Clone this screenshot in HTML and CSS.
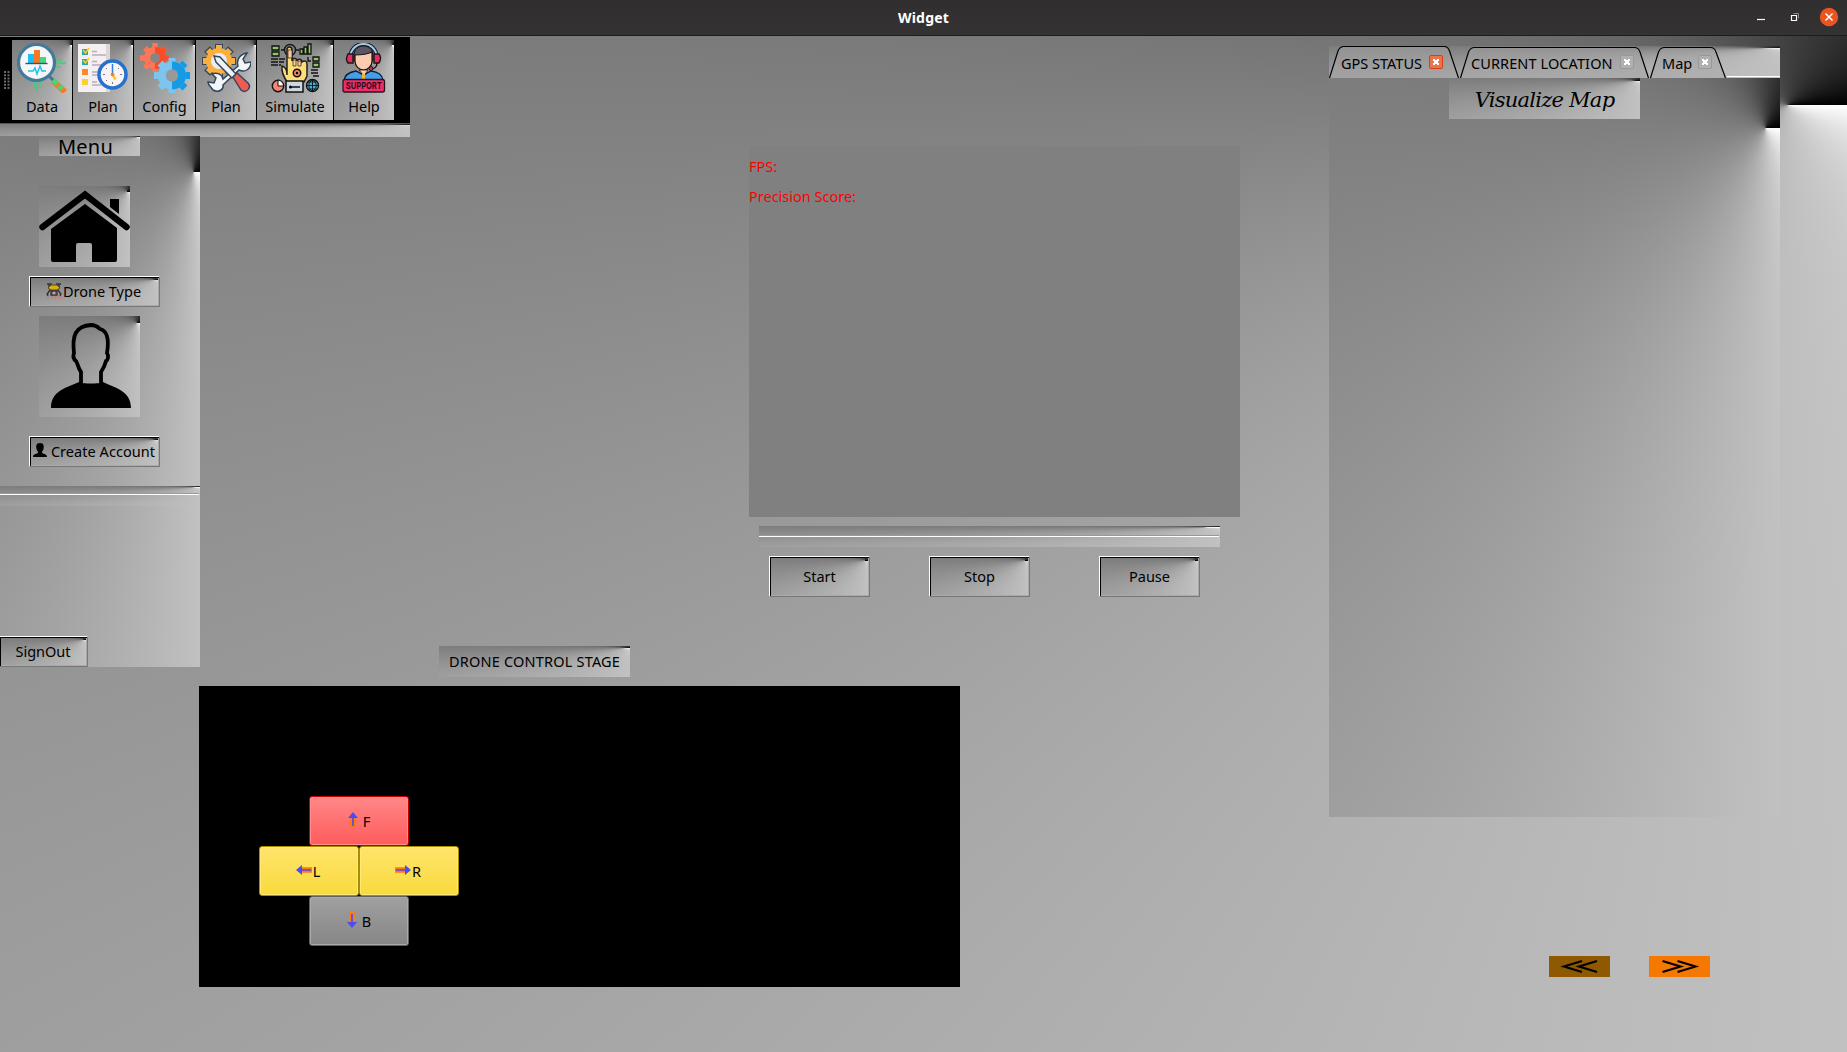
FILE: index.html
```html
<!DOCTYPE html>
<html lang="en">
<head>
<meta charset="utf-8">
<title>Widget</title>
<link rel="stylesheet" href="styles.css">
</head>
<body>
<header class="titlebar">
  <span class="title">Widget</span>
  <div class="winctl">
    <svg width="110" height="36" viewBox="0 0 110 36"><path d="M20 19.500h8" stroke="#fff" stroke-width="1.200"/><path d="M54.500 15.500h5v5h-5z" fill="none" stroke="#fff" stroke-width="1.200"/><path d="M56.500 13.500h5v5" fill="none" stroke="#8a8888"/><circle cx="92" cy="17" r="9.200" fill="#e95420"/><path d="M88.500 13.500l7 7m0-7l-7 7" stroke="#fff" stroke-width="1.500"/></svg>
  </div>
</header>
<main class="client shade">
  <section class="work">
    <div class="upper">
      <div class="left">
        <nav class="toolbar">
          <svg class="grip" width="6" height="18" viewBox="0 0 6 18"><path d="M1 0v18M4.500 0v18" stroke="#6a6a6a" stroke-width="2" stroke-dasharray="2 1.200"/></svg>
          <button class="tool shade w60"><svg viewBox="0 0 50 50"><g stroke="#3ccf7c" stroke-width="1.400"><path d="M38 17h7M40 20h9M38 24h6M17 39v6M20 39v10M23 39v6"/></g><path d="M31 32l8 8" stroke="#3e7590" stroke-width="3"/><path d="M36 38l12 11" stroke="#f77b20" stroke-width="6"/><path d="M36 37l4 4M42 43l3 3" stroke="#4bd27e" stroke-width="5"/><circle cx="19.500" cy="19.500" r="18" fill="#f4f6f7" stroke="#417a9b" stroke-width="3.200"/><path d="M11 11h6v9h-6z" fill="#20bdf0"/><path d="M17 7h6v13h-6z" fill="#f67a24"/><path d="M23 14h6v6h-6z" fill="#48d284"/><path d="M8.500 20.500h22" stroke="#31566d" stroke-width="1.400"/><path d="M11 28h5l2-3 2 6 3-8 2 5h4" fill="none" stroke="#1cc3e8" stroke-width="1.500"/></svg><span>Data</span></button>
          <button class="tool shade w60"><svg viewBox="0 0 50 50"><path d="M0 1h32v48H0z" fill="#f4eff0"/><path d="M28 1h4v48h-4z" fill="#dcd5da"/><g fill="#2aa7ae"><path d="M4 6h6v6H4zM4 16h6v6H4z"/></g><path d="M5 7l2.500 3L11 5M5 17l2.500 3 3.500-5" fill="none" stroke="#fccb28" stroke-width="1.500"/><path d="M4 26h6v6H4z" fill="#f98a26"/><path d="M4 36h6v6H4z" fill="#fdce30"/><g stroke="#b8adb9" stroke-width="1.300"><path d="M14 8.500h5M14 12h14M14 18.500h5M14 22h14M14 29h7M14 32h7M14 39h5M14 42h9"/></g><circle cx="34.500" cy="31.500" r="13.500" fill="#f8f4f5" stroke="#2671d0" stroke-width="3.500"/><path d="M34.500 21v10" stroke="#2c83dd" stroke-width="1.500"/><path d="M34.500 31.500l3 5" stroke="#fbc52b" stroke-width="2.500"/><circle cx="34.500" cy="31.500" r="1.800" fill="#f47d31"/><path d="M25 31.500h2M42 31.500h2M34.500 39v2M28 25l1 1M41 25l-1 1M28 38l1-1" stroke="#7a7781"/></svg><span>Plan</span></button>
          <button class="tool shade w61"><svg viewBox="0 0 50 50"><g stroke="#fb5126" stroke-width="5.500"><path stroke="#ff7657" d="M15 0v29M0 15h15M5 5l20 20M25 5L5 25"/><path d="M15 15h14"/><path d="M16 14l9-9M16 16l9 9"/></g><circle cx="15" cy="15" r="8" fill="none" stroke="#ff7657" stroke-width="6"/><path d="M15 7a8 8 0 010 16" fill="none" stroke="#f94c25" stroke-width="6"/><g stroke-width="7"><path stroke="#7bc5ef" d="M32 15v35M14 32.500h18M20 20l24 25M45 20L20 45"/><path stroke="#159be6" d="M33 32.500h17M33.500 31L45 20M33.500 34L45 45"/></g><circle cx="32" cy="32.500" r="10" fill="#8c8c8c" stroke="#7bc5ef" stroke-width="8"/><path d="M32 22.500a10 10 0 010 20" fill="none" stroke="#159be6" stroke-width="8"/><circle cx="15" cy="15" r="4.800" fill="#858585"/><circle cx="32" cy="32.500" r="6" fill="#999"/></svg><span>Config</span></button>
          <button class="tool shade w60"><svg viewBox="0 0 50 50"><g stroke="#33465d" stroke-width="8"><path d="M18 1v35M1 18h34M6 6l24 24M30 6L6 30"/></g><g stroke="#fbaf3e" stroke-width="6"><path d="M18 2v33M2 18h32M7 7l22 22M29 7L7 29"/></g><circle cx="18" cy="18" r="13" fill="#fbaf3e"/><circle cx="18" cy="18" r="8" fill="#e8edf3"/><path d="M12 47c-2-3-5-5-5-8l6 1 2-5-4-4c5-2 10 0 11 5l15-13c-2-6 2-12 9-13l-4 6 2 4 6-1c0 7-6 11-12 8L22 42c1 5-5 8-10 5z" fill="#f4f7fa" stroke="#31455d" stroke-width="1.500"/><path d="M13 13l6 1 16 17-4 4-16-16z" fill="#eef2f6" stroke="#31455d" stroke-width="1.400"/><path d="M32 34l4-4 11 10c4 5-2 11-7 7z" fill="#f15a50" stroke="#31455d" stroke-width="1.400"/></svg><span>Plan</span></button>
          <button class="tool shade w76"><svg viewBox="0 0 50 50"><g fill="#8cc765" stroke="#111" stroke-width="1.300"><path d="M2 3h7v4H2zM2 9h7v4H2zM30 6h3v5h-3zM34 4h3v7h-3zM38 1h3v10h-3zM43 14h6v4h-6zM43 20h6v4h-6z"/></g><g fill="none" stroke="#151515" stroke-width="1.400"><circle cx="20" cy="7" r="5.500"/><path d="M1 16h14M1 19h13M1 22h10M15 7h-4M26 7h3M38 14v4h4M41 27h8M41 30h8M43 33h6" stroke-dasharray="7 1"/></g><path d="M17 32V7c0-4 5-4 5 0v11c1-4 5-3 5 0 1-3 5-2 5 1 2-2 5-1 5 2v12l-3 6H17c-3-5-6-10-5-16 4 1 5 4 5 9z" fill="#fcdf78" stroke="#251f1c" stroke-width="1.500"/><path d="M18 7h4v8h-4zM23 17h3v6h-3zM28 18h3v5h-3z" fill="#ffcba5" stroke="#1d1d1d" stroke-width=".7"/><circle cx="27" cy="30" r="3.700" fill="#f78065" stroke="#111" stroke-width="1.500"/><circle cx="27" cy="30" r="1.200"/><path d="M16 38h17v11H16z" fill="#ced8e2" stroke="#111" stroke-width="1.500"/><circle cx="20.500" cy="44" r="1.500"/><path d="M21 44h9" stroke="#111" stroke-width="1.500"/><circle cx="8" cy="43" r="5.700" fill="#fa8474" stroke="#111" stroke-width="1.400"/><path d="M8 37v6h5.500A6 6 0 008 37" fill="#fff" stroke="#111"/><circle cx="42.500" cy="42.500" r="6" fill="#4caed1" stroke="#111" stroke-width="1.400"/><path d="M36 42.500h13M42.500 36.500v12M38 39h9M38 46h9M42.500 36.500c-5 4-5 8 0 12 5-4 5-8 0-12" fill="none" stroke="#111" stroke-width=".9"/></svg><span>Simulate</span></button>
          <button class="tool shade w60"><svg viewBox="0 0 50 50"><path d="M11 16C11-4 38-4 38 16" fill="none" stroke="#18202d" stroke-width="4"/><path d="M11 16C11-4 38-4 38 16" fill="none" stroke="#a6c8ea" stroke-width="2"/><path d="M15 12c0-12 19-12 19 0v6H15z" fill="#5b5663" stroke="#111"/><path d="M16 12c6 0 13-1 17-3v9c0 5-4 9-8.500 9S16 23 16 18z" fill="#fdcbb0" stroke="#1c1717" stroke-width="1.200"/><path d="M9 11h5v9H9q-3-4 0-9zM35 11h5q3 4 0 9h-5z" fill="#ed2961" stroke="#181818" stroke-width="1.400"/><path d="M38 20c0 4-3 6-6 6" fill="none" stroke="#111" stroke-width="1.400"/><circle cx="32" cy="25.500" r="2" fill="#ed2961" stroke="#111"/><path d="M5 37c1-6 6-8 12-9l7.500 4 7.500-4c7 1 11 3 12 9z" fill="#429fec" stroke="#101d30" stroke-width="1.400"/><path d="M20 27h9l-4 6z" fill="#fdcbb0" stroke="#111" stroke-width=".8"/><path d="M24.500 31v7" stroke="#f5b62b" stroke-width="3"/><rect x="4" y="36.500" width="41.500" height="12.500" rx="2" fill="#f02d69" stroke="#2c1422" stroke-width="1.300"/><text x="24.800" y="46.300" text-anchor="middle" textLength="36" lengthAdjust="spacingAndGlyphs" font-family="Inter,sans-serif" font-weight="700" font-size="9.500" fill="#24111c">SUPPORT</text></svg><span>Help</span></button>
        </nav>
        <div class="strip shade"></div>
        <aside class="side shade">
          <div class="menu shade">Menu</div>
          <div class="home shade"><svg width="91" height="81" viewBox="0 0 91 81"><path d="M3.500 41L46 8.500 87.500 41" fill="none" stroke="#000" stroke-width="6.500" stroke-linecap="round" stroke-linejoin="miter"/><path d="M71 13h9v15l-9-7z"/><path d="M46 18l32 24v32q0 2-2 2H53V59q0-2-2-2H39q-2 0-2 2v17H14q-2 0-2-2V43z"/></svg></div>
          <button class="btn shade b131 drone"><svg width="16" height="16" viewBox="0 0 16 16"><path d="M1 1h5M10 1h5M3 1v3M13 1v3" stroke="#333" stroke-width="1.400"/><path d="M2 5l3-3h6l3 3-3 2H5z" fill="#dcae12" stroke="#50441c"/><path d="M4 7l-3 4 1 2M12 7l3 4-1 2M5 8h6v4H5z" fill="#666" stroke="#333" stroke-width="1.300"/><circle cx="8" cy="10" r="1.500" fill="#aaa"/><path d="M4 13l-3 3M7 13l-1 3M9 13l1 3M12 13l3 3" stroke="#e06a5d"/></svg><span>Drone Type</span></button>
          <div class="person shade"><svg width="101" height="101" viewBox="0 0 101 101"><path d="M42 68V56c-3-4-3-8-5-11-3-2-3-5-2-8-2-17 1-27 17-28 5 0 7 2 9 4 8 2 9 12 7 24 2 3 1 7-1 8-1 4-3 8-5 11v12" fill="none" stroke="#000" stroke-width="3.800"/><path d="M40 66c-12 6-28 8-28 26h80c0-18-17-20-28-26-4 2-20 2-24 0z"/></svg></div>
          <button class="btn shade b131 acct"><svg width="14" height="15" viewBox="0 0 14 15"><path d="M7 0c4 0 4 3 3.500 6L9 9v1c2 1 5 1 5 4H0c0-3 3-3 5-4V9L3.500 6C3 3 3 0 7 0"/></svg><span>Create Account</span></button>
          <div class="hline shade"></div>
          <button class="btn shade signout"><span>SignOut</span></button>
        </aside>
      </div>
      <div class="mid"><div class="stagelabel shade"><span>DRONE CONTROL STAGE</span></div></div>
      <div class="video">
        <div class="screen"><p>FPS:</p><p>Precision Score:</p></div>
        <div class="hline wide shade"></div>
        <div class="playrow">
          <button class="btn shade"><span>Start</span></button>
          <button class="btn shade"><span>Stop</span></button>
          <button class="btn shade pause"><span>Pause</span></button>
        </div>
      </div>
    </div>
    <section class="stage">
      <div class="pad">
        <button class="key red"><svg width="16" height="16" viewBox="0 0 16 16"><path d="M8 16V4" stroke="#ff7a10" stroke-width="5.500"/><path d="M8 14V4" stroke="#5951de" stroke-width="1.800"/><path d="M3 6l5-6 5 6z" fill="#4d4cf0"/></svg><span>F</span></button>
        <div class="row">
          <button class="key yellow flat"><svg width="16" height="16" viewBox="0 0 16 16"><path d="M16 8H4" stroke="#ff7a10" stroke-width="5.500"/><path d="M15 8H4" stroke="#7a51be" stroke-width="1.800"/><path d="M6 3L0 8l6 5z" fill="#4d4cf0"/></svg><span>L</span></button>
          <button class="key yellow flat"><svg width="16" height="16" viewBox="0 0 16 16"><path d="M0 8h12" stroke="#ff7a10" stroke-width="5.500"/><path d="M1 8h11" stroke="#7a51be" stroke-width="1.800"/><path d="M10 3l6 5-6 5z" fill="#4d4cf0"/></svg><span>R</span></button>
        </div>
        <button class="key gray"><svg width="16" height="16" viewBox="0 0 16 16"><path d="M8 0v12" stroke="#ff7a10" stroke-width="5.500"/><path d="M8 2v10" stroke="#5951de" stroke-width="1.800"/><path d="M3 10l5 6 5-6z" fill="#4d4cf0"/></svg><span>B</span></button>
      </div>
    </section>
  </section>
  <section class="right">
    <div class="tabs shade">
      <div class="tab t1"><svg width="131" height="32" viewBox="0 0 131 32"><path class="tabline" d="M.5 32L9 5q2-4.500 6-4.500h100q4 0 5.500 4.500l9 27"/></svg><span>GPS STATUS</span><i class="close hot"></i></div>
      <div class="tab t2"><svg width="190" height="32" viewBox="0 0 190 32"><path class="tabline" d="M.5 32l8-26q2-4.500 6-4.500h160q4 0 5.500 4.500l8.500 26"/></svg><span>CURRENT LOCATION</span><i class="close"></i></div>
      <div class="tab t3"><svg width="77" height="32" viewBox="0 0 77 32"><path class="tabline" d="M.5 32l8-26q2-4.500 6-4.500h46q4 0 5.500 4.500l9.500 26"/></svg><span>Map</span><i class="close"></i></div>
      <div class="base"></div>
    </div>
    <div class="map shade"><div class="vis shade"><span>Visualize Map</span></div></div>
    <div class="nav">
      <button class="brown"><svg width="61" height="21" viewBox="0 0 61 21"><path d="M33 5L15 10.500 33 16M48 5l-18 5.500L48 16"/></svg></button>
      <button class="orange"><svg width="61" height="21" viewBox="0 0 61 21"><path d="M13.500 5l18 5.500-18 5.500M28.500 5l18 5.500-18 5.500"/></svg></button>
    </div>
  </section>
</main>
</body>
</html>
```
FILE: styles.css
```css
* { box-sizing: border-box; }
body { margin: 0; width: 1847px; height: 1052px; overflow: hidden; font: 14.5px/20px "Noto Sans", sans-serif; color: #000; }
button { font: inherit; color: inherit; border: 0; padding: 0; margin: 0; background: none; }
p { margin: 0; }
svg { display: block; flex: none; }
span { white-space: nowrap; }

/* Conical gradient stretched to the box of each widget (--w by --h) */
.shade { position: relative; isolation: isolate; overflow: hidden; flex: none; width: calc(var(--w) * 1px); height: calc(var(--h) * 1px); }
.shade::before {
  content: ""; position: absolute; z-index: -1; left: 0; top: 0; width: 100px; height: 100px;
  transform-origin: 0 0; transform: scale(calc(var(--w) / 100), calc(var(--h) / 100));
  background: conic-gradient(from 90deg at 96.8% 6.8%, #fff, #000);
}

.titlebar { height: 36px; background: linear-gradient(#312e2f, #353233); border-bottom: 1px solid #1d1b1b; display: grid; grid-template-columns: 1fr auto 1fr; align-items: center; color: #fff; font-weight: 700; font-size: 14px; letter-spacing: .2px; }
.title { grid-column: 2; }
.winctl { grid-column: 3; justify-self: end; }

.client { --w: 1847; --h: 1016; display: flex; }
.work { width: 1329px; display: flex; flex-direction: column; }
.upper { height: 650px; display: grid; grid-template-columns: 410px 339px 1fr; }
.left { display: flex; flex-direction: column; }

.toolbar { height: 87px; margin-top: 1px; background: #000; border-bottom: 1px solid #555; display: flex; align-items: flex-start; gap: 1px; padding: 3px 0 0 4px; }
.grip { margin: 31px 1px 0 0; }
.tool { --h: 80; display: flex; flex-direction: column; align-items: center; padding-top: 3px; }
.tool svg { width: 50px; height: 50px; margin-bottom: 3px; }
.w60 { --w: 60; }
.w61 { --w: 61; }
.w76 { --w: 76; }
.strip { --w: 410; --h: 13; margin-bottom: -1px; }

.side { --w: 200; --h: 531; display: flex; flex-direction: column; align-items: flex-start; }
.menu { --w: 101; --h: 20; margin-left: 39px; padding-left: 19px; font-size: 20px; line-height: 21px; letter-spacing: .2px; overflow: visible; }
.home { --w: 91; --h: 81; margin: 30px 0 9px 39px; }
.person { --w: 101; --h: 101; margin: 9px 0 19px 39px; }

.btn { --w: 101; --h: 41; display: flex; align-items: center; justify-content: center; gap: 2px; padding-bottom: 2px; }
.btn::before { left: 2px; top: 2px; transform: scale(calc((var(--w) - 4) / 100), calc((var(--h) - 4) / 100)); }
.btn::after { content: ""; position: absolute; inset: 0; border: 1px solid; border-color: #fff #777 #777 #fff; box-shadow: inset 1px 1px #000, inset -1px -1px #aaa; }
.b131 { --w: 131; --h: 31; margin-left: 29px; }
.drone { gap: 1px; padding-right: 2px; }
.acct { gap: 4px; padding-right: 1px; letter-spacing: .05px; }
.signout { --w: 89; --h: 31; margin: auto 0 0 -1px; padding-right: 1px; }

.hline { --w: 200; --h: 20; margin-top: 19px; }
.hline::after { content: ""; position: absolute; left: 0; right: 1px; top: 7px; height: 2px; background: linear-gradient(#999 50%, #fff 50%); }

.mid { display: flex; align-items: flex-end; padding: 0 0 9px 29px; }
.stagelabel { --w: 191; --h: 31; display: flex; align-items: center; justify-content: center; padding-bottom: 1px; letter-spacing: .2px; }

.video { padding-top: 110px; }
.screen { width: 491px; height: 371px; background: #808080; color: #f00; padding-top: 10px; display: flex; flex-direction: column; gap: 10px; }
.wide { --w: 461; --h: 21; margin: 9px 0 9px 10px; }
.wide::after { top: 9px; }
.playrow { display: flex; gap: 59px; padding-left: 20px; }
.pause { margin-left: 10px; }

.stage { width: 761px; height: 301px; margin-left: 199px; background: #000; padding: 110px 0 0 60px; }
.pad { width: 200px; display: flex; flex-direction: column; align-items: center; }
.row { display: flex; }
.key { width: 100px; height: 50px; border: 1px solid; border-radius: 3px; display: flex; align-items: center; justify-content: center; gap: 2px; padding-right: 3px; }
.flat { gap: 1px; padding-right: 2px; }
.key svg { margin-top: -2px; }
.red { background: linear-gradient(#ff8787, #ff5c5c); border-color: #c20000; box-shadow: inset 0 0 0 1px #ff8f8f; }
.yellow { background: linear-gradient(#ffe46c, #f9da3c); border-color: #a88d00; box-shadow: inset 0 0 0 1px #ffe87c; }
.gray { background: linear-gradient(#a0a0a0, #868686); border-color: #606060; box-shadow: inset 0 0 0 1px #aaa; }

.right { width: 518px; padding-top: 10px; }
.tabs { --w: 451; --h: 32; display: flex; }
.tab { display: grid; align-items: center; grid-template-columns: 1fr 14px 15px; }
.tab svg { grid-row: 1; grid-column: 1 / 4; }
.tab span { grid-row: 1; grid-column: 1; padding: 2px 0 0 12px; z-index: 1; }
.t1 { width: 131px; grid-template-columns: 1fr 14px 17px; }
.t1 span { padding-top: 1px; }
.t2 { width: 190px; grid-template-columns: 1fr 14px 16px; letter-spacing: .1px; }
.t2 span { padding-left: 11px; }
.t3 { width: 77px; }
.tabline { fill: rgba(165, 165, 165, .5); stroke: #000; stroke-width: 1.2; }
.close {
  grid-row: 1; grid-column: 2; width: 14px; height: 14px; border: 1px solid #999; border-radius: 2px;
  background: linear-gradient(45deg, transparent 36%, #fff 36% 64%, transparent 64%) center / 6px 6px no-repeat, linear-gradient(-45deg, transparent 36%, #fff 36% 64%, transparent 64%) center / 6px 6px no-repeat, #b0b0b0;
}
.hot { background-color: #e8764c; border-color: #dc3c1c; }
.base { flex: 1; align-self: flex-end; height: 1px; background: #fff; margin-bottom: 1px; }

.map { --w: 451; --h: 739; padding-left: 120px; }
.vis { --w: 191; --h: 41; display: flex; align-items: center; justify-content: center; font: italic 21px/30px "DejaVu Serif", serif; letter-spacing: -.75px; padding-top: 2px; }
.nav { display: flex; gap: 39px; padding: 139px 0 0 220px; }
.nav svg { fill: none; stroke: #000; stroke-width: 2.2; }
.brown { background: #8f5902; }
.orange { background: #f57900; }
```
